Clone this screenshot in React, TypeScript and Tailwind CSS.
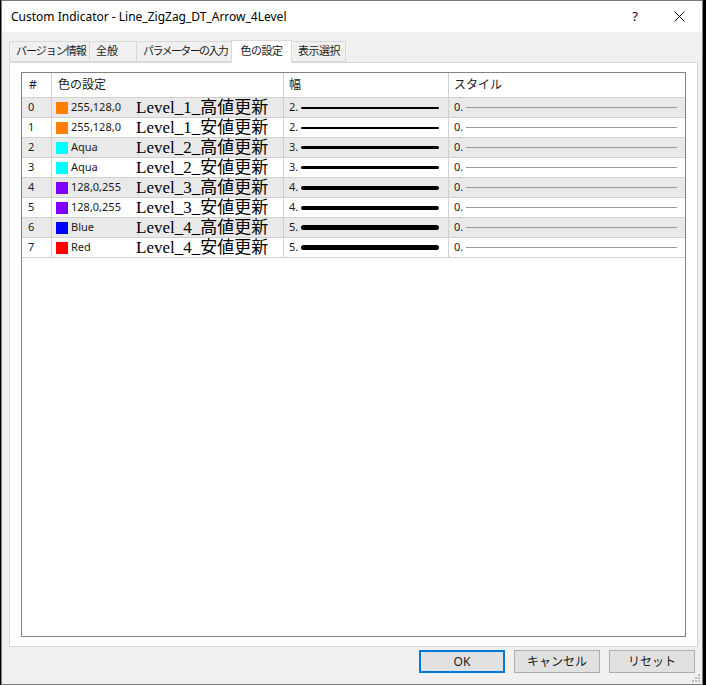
import React from 'react';

const ui = "font-['Noto_Sans','Noto_Sans_CJK_JP',sans-serif]";

const rows = [
  { n: '0', sw: 'bg-[#ff8000]', name: '255,128,0', label: 'Level_1_高値更新', w: '2.', line: 'h-[2px]', tone: 'bg-[#e9e9e9]' },
  { n: '1', sw: 'bg-[#ff8000]', name: '255,128,0', label: 'Level_1_安値更新', w: '2.', line: 'h-[2px]', tone: 'bg-white' },
  { n: '2', sw: 'bg-[#00ffff]', name: 'Aqua', label: 'Level_2_高値更新', w: '3.', line: 'h-[3px]', tone: 'bg-[#e9e9e9]' },
  { n: '3', sw: 'bg-[#00ffff]', name: 'Aqua', label: 'Level_2_安値更新', w: '3.', line: 'h-[3px]', tone: 'bg-white' },
  { n: '4', sw: 'bg-[#8000ff]', name: '128,0,255', label: 'Level_3_高値更新', w: '4.', line: 'h-[4px]', tone: 'bg-[#e9e9e9]' },
  { n: '5', sw: 'bg-[#8000ff]', name: '128,0,255', label: 'Level_3_安値更新', w: '4.', line: 'h-[4px]', tone: 'bg-white' },
  { n: '6', sw: 'bg-[#0000ff]', name: 'Blue', label: 'Level_4_高値更新', w: '5.', line: 'h-[5px]', tone: 'bg-[#e9e9e9]' },
  { n: '7', sw: 'bg-[#ff0000]', name: 'Red', label: 'Level_4_安値更新', w: '5.', line: 'h-[5px]', tone: 'bg-white' },
];

const tabs = [
  { t: 'バージョン情報', w: 'w-[81px]', tr: 'tracking-[-1px]' },
  { t: '全般', w: 'w-[48px]', tr: 'tracking-[0px]' },
  { t: 'パラメーターの入力', w: 'w-[96px]', tr: 'tracking-[-1.6px]' },
  { t: '色の設定', w: 'w-[61px]', tr: 'tracking-[-0.5px]' },
  { t: '表示選択', w: 'w-[55px]', tr: 'tracking-[-0.5px]' },
];

export default function App() {
  return (
    <div className={`w-[706px] h-[685px] bg-black ${ui} text-[12px] text-[#1a1a1a]`}>
      <div className="ml-[1px] w-[702px] h-[685px] border border-[#7a7a7a] bg-[#f0f0f0] flex flex-col">
        {/* title bar */}
        <div className="h-[31px] bg-white flex items-center shrink-0">
          <span className="pl-[9px] text-[12px] text-black">Custom Indicator - Line_ZigZag_DT_Arrow_4Level</span>
          <span className="ml-auto mr-[36px] text-[13px] text-black">?</span>
          <svg className="mr-[17px]" width="11" height="11" viewBox="0 0 11 11">
            <path d="M0.5 0.5L10.5 10.5M10.5 0.5L0.5 10.5" stroke="#000" strokeWidth="1" />
          </svg>
        </div>

        {/* tabs */}
        <div className="mt-[8px] ml-[7px] h-[22px] flex items-end relative z-10">
          {tabs.map((t, i) =>
            i === 3 ? (
              <div key={t.t} className={`${t.w} ${t.tr} h-[23px] -mb-px -ml-px bg-white border border-[#d9d9d9] border-b-white flex items-center justify-center text-[11px] whitespace-nowrap`}>
                {t.t}
              </div>
            ) : (
              <div key={t.t} className={`${t.w} ${t.tr} h-[21px] border border-[#d9d9d9] -ml-px first:ml-0 bg-[#f0f0f0] flex items-center pl-[6px] text-[11px] whitespace-nowrap overflow-hidden`}>
                {t.t}
              </div>
            )
          )}
        </div>

        {/* panel */}
        <div className="ml-[7px] mr-[4px] h-[585px] bg-white border border-[#d9d9d9] px-[11px] py-[9px]">
          <div className="h-full border border-[#828282] bg-white">
            <div className="grid grid-cols-[30px_232px_165px_1fr] h-[25px] border-b border-[#d0d0d0] text-[12px]">
              <div className="pl-[7px] flex items-center border-r border-[#d0d0d0]">#</div>
              <div className="pl-[6px] flex items-center border-r border-[#d0d0d0]">色の設定</div>
              <div className="pl-[5px] flex items-center border-r border-[#d0d0d0]">幅</div>
              <div className="pl-[5px] flex items-center">スタイル</div>
            </div>
            {rows.map((r) => (
              <div key={r.n} className={`grid grid-cols-[30px_232px_165px_1fr] h-[20px] border-b border-[#d0d0d0] ${r.tone}`}>
                <div className="pl-[6px] flex items-center border-r border-[#d0d0d0] text-[11px]">{r.n}</div>
                <div className="pl-[4px] flex items-center border-r border-[#d0d0d0]">
                  <div className={`w-[12px] h-[12px] ${r.sw}`} />
                  <span className="ml-[3px] w-[65px] text-[11px] whitespace-nowrap">{r.name}</span>
                  <span className="font-['Liberation_Serif','Noto_Sans_CJK_JP',serif] text-[17px] leading-none text-black whitespace-nowrap">{r.label}</span>
                </div>
                <div className="pl-[5px] flex items-center border-r border-[#d0d0d0] text-[11px]">
                  <span className="w-[11px]">{r.w}</span>
                  <div className={`ml-[1px] w-[138px] ${r.line} rounded-full bg-black`} />
                </div>
                <div className="pl-[5px] flex items-center text-[11px]">
                  <span className="w-[12px]">0.</span>
                  <div className="w-[211px] h-px bg-[#9a9a9a]" />
                </div>
              </div>
            ))}
          </div>
        </div>

        {/* buttons */}
        <div className="mt-[3px] flex justify-end gap-[9px] pr-[7px] relative">
          <button className="w-[86px] h-[23px] bg-[#e1e1e1] border-2 border-[#0078d7] text-[12px]">OK</button>
          <button className="w-[86px] h-[23px] bg-[#e1e1e1] border border-[#adadad] text-[12px]">キャンセル</button>
          <button className="w-[86px] h-[23px] bg-[#e1e1e1] border border-[#adadad] text-[12px]">リセット</button>
        </div>
        <div className="mt-auto self-end mr-[1px] mb-[1px]">
          <svg width="9" height="9" viewBox="0 0 9 9">
            <rect x="6" y="0" width="2" height="2" fill="#bcbcbc" />
            <rect x="3" y="3" width="2" height="2" fill="#bcbcbc" />
            <rect x="6" y="3" width="2" height="2" fill="#bcbcbc" />
            <rect x="0" y="6" width="2" height="2" fill="#bcbcbc" />
            <rect x="3" y="6" width="2" height="2" fill="#bcbcbc" />
            <rect x="6" y="6" width="2" height="2" fill="#bcbcbc" />
          </svg>
        </div>
      </div>
    </div>
  );
}
